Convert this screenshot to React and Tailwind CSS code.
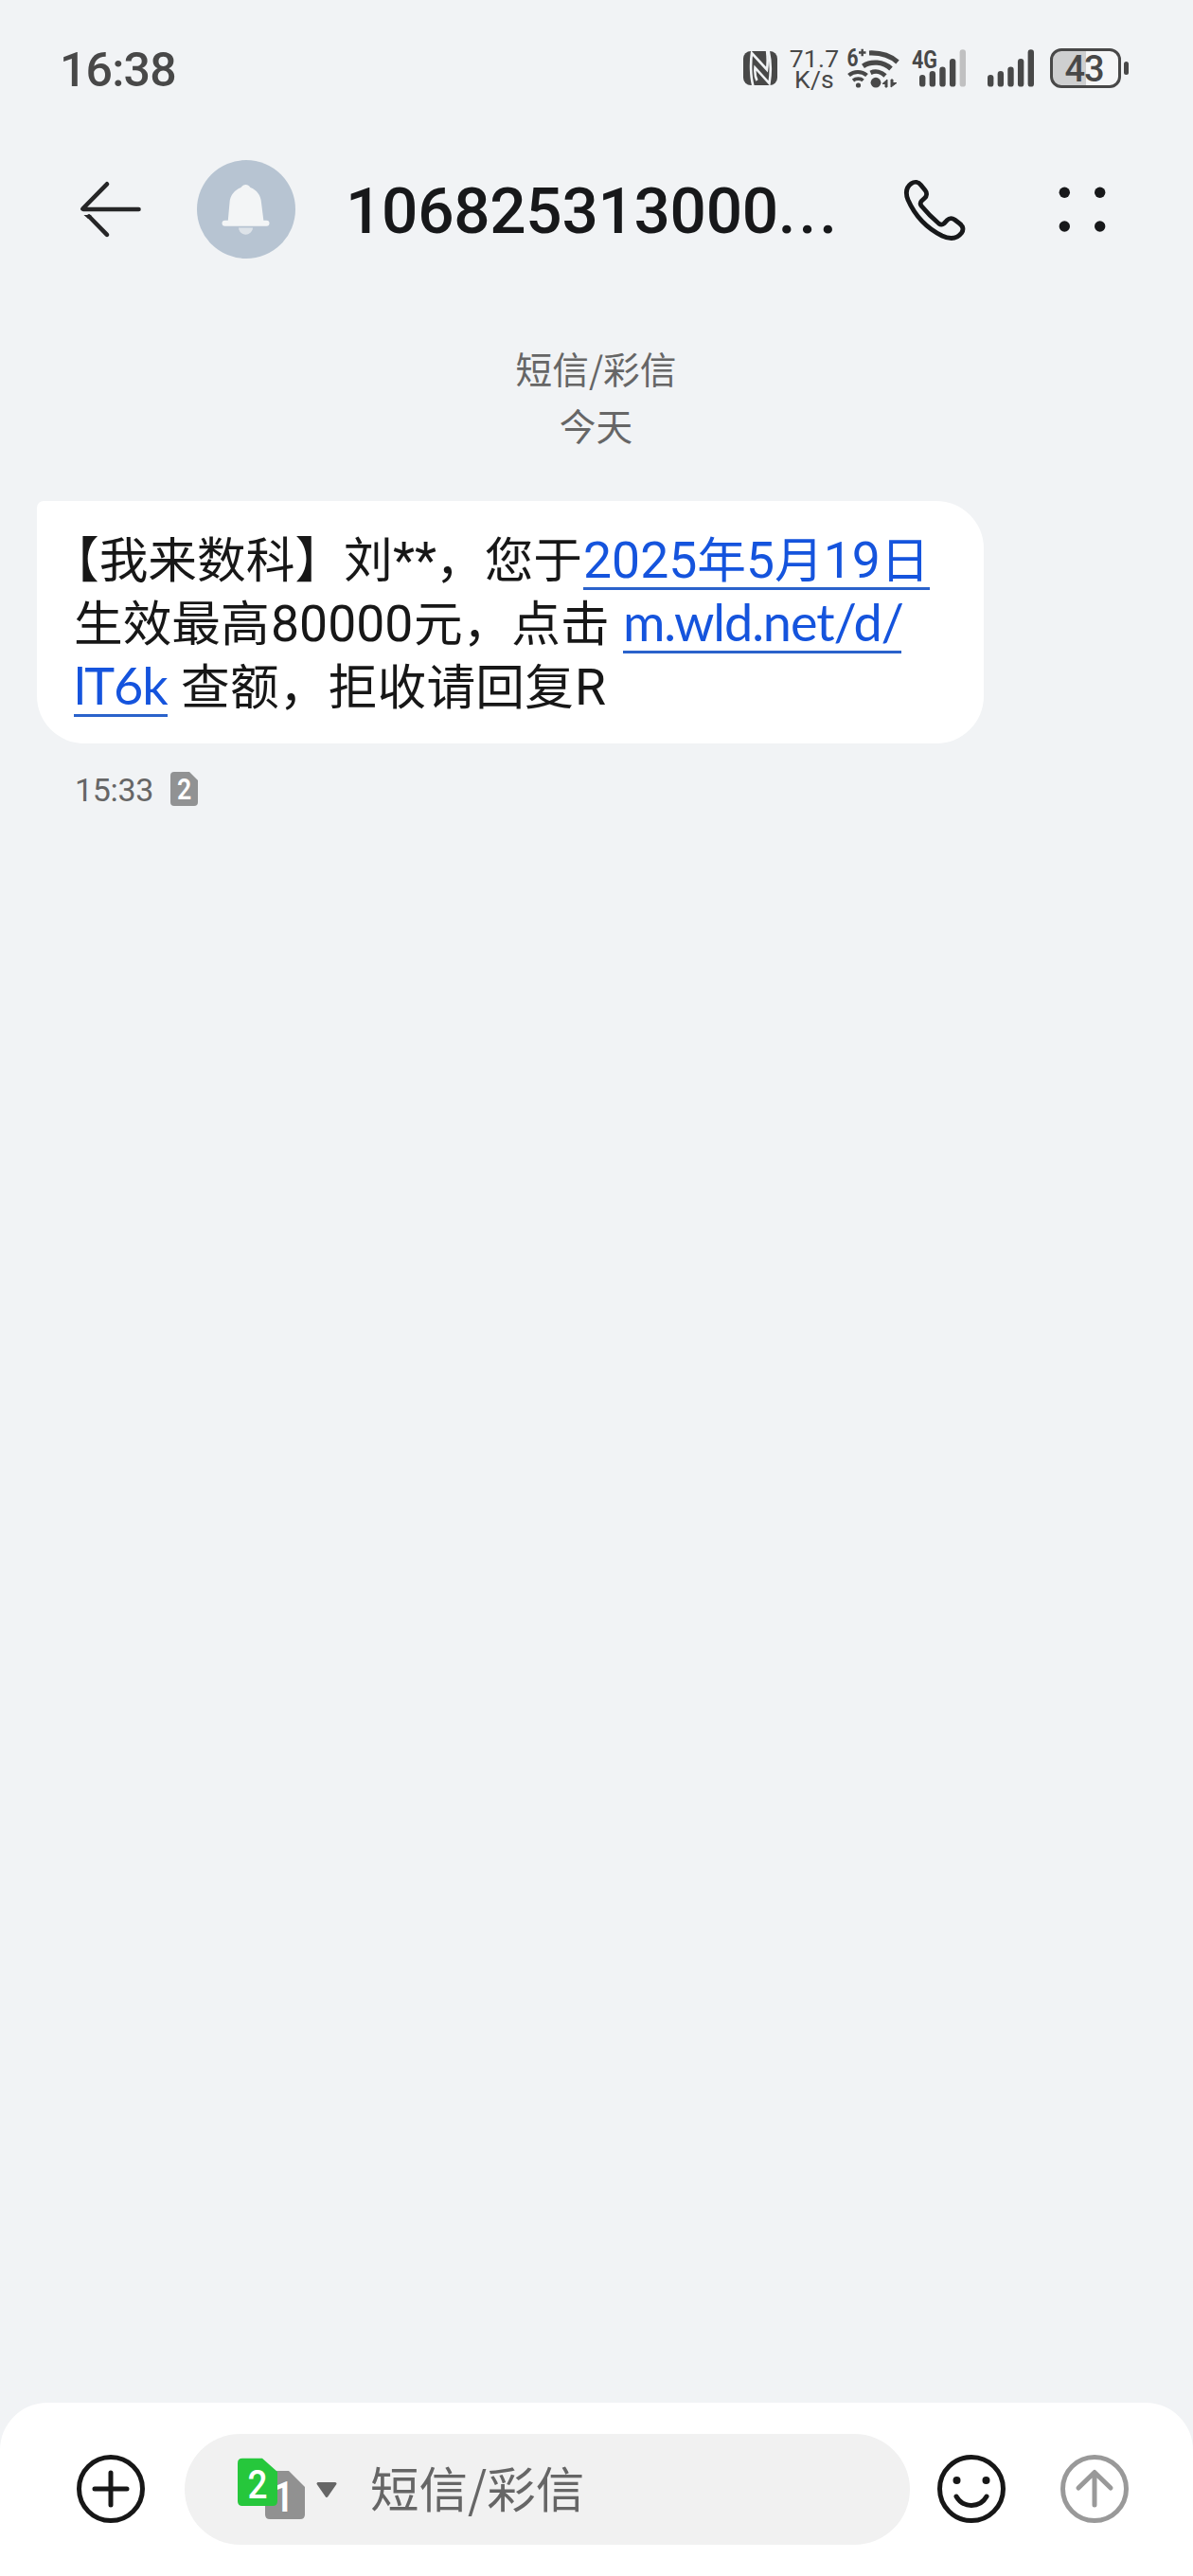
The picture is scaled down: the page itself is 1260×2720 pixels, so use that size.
import React from "react";

function NfcIcon() {
  return (
    <svg width="36" height="36" viewBox="0 0 36 36" className="shrink-0">
      <rect width="36" height="36" rx="8" fill="#484848" />
      <g fill="none" stroke="#f1f3f5" strokeWidth="2.600">
        <path d="M10.500 37C7.600 27 7.600 11 9 2L25 19.500C26 13 26 7 25 -1" />
        <path d="M26.500 -1C29.400 11 29 25 27.500 34L12.500 17.500C12 23 12.300 27 14.500 31" />
      </g>
    </svg>
  );
}

function WifiIcon() {
  return (
    <svg width="56" height="44" viewBox="894 49 56 44" className="shrink-0 overflow-visible">
      <g fill="none" stroke="#484848" strokeWidth="5.200">
        <path d="M918 55C930 54.500 940 57.500 948 64.500" />
        <path d="M911.500 68.800C920 63 933 64 941 71.500" />
        <path d="M919.500 75.800C925 73.200 931 75 935 79" strokeWidth="4.600" />
        <path d="M896.500 78.500C902 73.800 910 73.800 915.500 78.500" strokeWidth="4.200" />
        <path d="M901 84C904 81.500 909 81.500 911.500 84" strokeWidth="3.600" />
      </g>
      <circle cx="906.500" cy="89" r="2.600" fill="#484848" />
      <circle cx="925" cy="86.200" r="5.400" fill="#484848" />
      <path d="M932 87.500L937 83V91H935V87.500ZM941 91V83H943V86.500H947L941 91Z" fill="#484848" stroke="#484848" strokeWidth="1" />
      <text x="894.500" y="69" fontFamily="Roboto" fontSize="25" fontWeight="700" textLength="12" lengthAdjust="spacingAndGlyphs" fill="#484848">6</text>
      <path d="M907 54.500H914.500M910.700 50.700V58.300" stroke="#484848" strokeWidth="2.400" />
    </svg>
  );
}

function Signal({ weak = false }) {
  const tops = [79, 75, 70.5, 62, 52.3];
  return (
    <svg width="50" height="40" viewBox="0 52 50 40" className="shrink-0">
      {tops.map((t, i) => (
        <rect key={t} x={i * 10.65} y={t} width="6.400" height={91.6 - t} rx="3.200" fill={weak && i === 4 ? "#c0c0c1" : "#484848"} />
      ))}
    </svg>
  );
}

function Battery() {
  return (
    <div className="ml-[16px] flex items-center">
      <div className="h-[42px] w-[75px] rounded-[12px] border-[3px] border-[#484848] bg-[linear-gradient(90deg,#cecfd0_35px,#f5f6f7_35px)]">
        <div className="pr-[3px] text-center text-[38px] leading-[38px] font-medium tracking-[-1px]">43</div>
      </div>
      <div className="ml-[3px] h-[14px] w-[5px] rounded-full bg-[#484848]" />
    </div>
  );
}

function StatusBar() {
  return (
    <div className="flex h-[144px] items-center pl-[63px] font-[Roboto] text-[#484848]">
      <div className="mt-[4px] w-[130px] text-[50px] leading-[60px] font-medium tracking-[-0.800px]">16:38</div>
      <div className="ml-auto mr-[68px] flex items-center">
        <NfcIcon />
        <div className="ml-[10px] flex w-[58px] flex-col items-center pt-[1px] text-[26.500px] leading-[22px] font-[450] tracking-[0.200px]">
          <span>71.7</span>
          <span>K/s</span>
        </div>
        <div className="ml-[5px]"><WifiIcon /></div>
        <div className="relative ml-[21px]">
          <Signal weak />
          <svg width="30" height="24" viewBox="0 0 30 24" className="absolute -left-[9px] -top-[1px] overflow-visible">
            <text x="1" y="20.500" fontFamily="Roboto" fontSize="25" fontWeight="700" textLength="27" lengthAdjust="spacingAndGlyphs" fill="#484848">4G</text>
          </svg>
        </div>
        <div className="ml-[22px]"><Signal /></div>
        <Battery />
      </div>
    </div>
  );
}

function Header() {
  return (
    <div className="flex h-[154px] items-center pl-[83px]">
      <svg width="66" height="62" viewBox="83 190 66 62" className="shrink-0">
        <g fill="none" stroke="#262627" strokeWidth="4.600" strokeLinecap="round" strokeLinejoin="round">
          <path d="M113 194.300L87.300 220.500L88 221H146.500" />
          <path d="M94 228.500L113 247.800" />
        </g>
        <path d="M88.500 227H96L98 231H93Z" fill="#262627" />
      </svg>
      <svg width="104" height="104" viewBox="208 169 104 104" className="ml-[59px] shrink-0">
        <circle cx="260" cy="221" r="52" fill="#b7c4d2" />
        <path d="M240.700 234L242.500 214C243 206 248 200.500 254.500 198C257 194 262 194 264.500 198C271 200.500 275.500 206 276 214L278.500 234Z" fill="#f3f5f6" />
        <rect x="234.500" y="232.800" width="50" height="6" rx="3" fill="#f3f5f6" />
        <path d="M252 240.500H267C266 250 253 250 252 240.500Z" fill="#dde3e9" />
      </svg>
      <div className="mt-[4px] ml-[53px] w-[591px] shrink-0 whitespace-nowrap font-[Roboto] text-[67.500px] leading-[80px] font-medium tracking-[-0.300px] text-[#17181a]">
        106825313000<span className="tracking-[3px]">...</span>
      </div>
      <svg width="66" height="66" viewBox="954 188 66 66" className="-ml-[2px] mt-px shrink-0">
        <path
          d="M962.500 192.800C966 190.300 970 191 972.500 194.200L977 199.800C979.300 202.600 979 206 976.500 208.300L973.500 211C971.800 212.600 971.700 214.200 973 216.200C979 223.500 985 229.500 991.500 235C993.500 236.500 995.200 236.600 997 235L1000 231.800C1002.500 229.300 1005.500 229 1008.300 231L1013.500 235C1017.300 237.800 1018 241.500 1015.500 245C1010.500 251.500 1004 252.200 995 248C979 240 966 226 959 210C956 202.500 957 196.800 962.500 192.800Z"
          fill="none" stroke="#17181a" strokeWidth="4.800" strokeLinejoin="round"
        />
      </svg>
      <svg width="50" height="48" viewBox="1118 196 50 48" className="ml-[98px] shrink-0" fill="#17181a">
        <circle cx="1124.300" cy="202.300" r="5.700" />
        <circle cx="1161.700" cy="202.300" r="5.700" />
        <circle cx="1124.300" cy="238" r="5.700" />
        <circle cx="1161.700" cy="238" r="5.700" />
      </svg>
    </div>
  );
}

function SimBadge() {
  return (
    <svg width="29" height="36" viewBox="0 0 29 36" className="ml-[20px]">
      <path d="M4 0H20L29 9V32Q29 36 25 36H4Q0 36 0 32V4Q0 0 4 0Z" fill="#919293" />
      <text x="7" y="29" fontFamily="Roboto" fontSize="31" fontWeight="600" textLength="15" lengthAdjust="spacingAndGlyphs" fill="#fff">2</text>
    </svg>
  );
}

function Link({ className, children }) {
  return (
    <span className={"relative h-[67px] text-[#1554dd] after:absolute after:-bottom-[2px] after:left-0 after:h-[3px] after:w-full after:bg-[#2a62cb] after:content-[''] " + className}>
      {children}
    </span>
  );
}

function Num({ children }) {
  return <span className="font-[Roboto] text-[53.500px] leading-none">{children}</span>;
}

function Url({ children }) {
  return <span className="font-[Lato] text-[54px] leading-none tracking-[-1.050px]">{children}</span>;
}

function Message() {
  return (
    <div className="ml-[39px] mt-[46px] h-[256px] w-[1000px] rounded-[50px] rounded-tl-[7px] bg-white pl-[39px] pt-[25px]">
      <div className="whitespace-nowrap font-['Noto_Sans_CJK_SC',sans-serif] text-[51.700px] leading-[67px] text-[#171717]">
        <div className="flex h-[67px]">
          <span className="-ml-[25px] w-[362px]">【我来数科】刘</span>
          <span className="w-[45px]"><Num>**</Num></span>
          <span className="w-[156px]">，您于</span>
          <Link className="w-[366px]">
            <Num>2025</Num>年<Num>5</Num>月<Num>19</Num>日
          </Link>
        </div>
        <div className="flex h-[67px]">
          <span className="w-[208px]">生效最高</span>
          <span className="w-[151px]"><Num>80000</Num></span>
          <span className="w-[221px]">元，点击</span>
          <Link className="w-[294px]"><Url>m.wld.net/d/</Url></Link>
        </div>
        <div className="flex h-[67px]">
          <Link className="w-[99px]"><Url>lT6k</Url></Link>
          <span className="ml-[14px] w-[416px] tracking-[0.200px]">查额，拒收请回复</span>
          <span><Num>R</Num></span>
        </div>
      </div>
    </div>
  );
}

function Composer() {
  return (
    <div className="mt-auto flex h-[183px] items-start rounded-t-[50px] bg-white pl-[81px] pt-[33px]">
      <div className="flex h-[117px] items-center">
        <svg width="72" height="72" viewBox="0 0 72 72" className="mb-px" fill="none" stroke="#171717" strokeWidth="5" strokeLinecap="round">
          <circle cx="36" cy="36" r="33.500" />
          <path d="M19 36H53M36 19V53" />
        </svg>
        <div className="ml-[42px] flex h-[117px] w-[766px] items-center rounded-full bg-[#f1f1f1] pl-[56px]">
          <svg width="72" height="66" viewBox="251 2595 72 66" className="mb-px" fontFamily="Roboto" fontWeight="500" fill="#fff">
            <path d="M285 2609H305L322 2626V2655Q322 2660 317 2660H285Q280 2660 280 2655V2614Q280 2609 285 2609Z" fill="#919191" />
            <text x="288.500" y="2651.500" fontSize="45" fontWeight="600" textLength="22" lengthAdjust="spacingAndGlyphs">1</text>
            <path d="M256 2595.700H277L293 2610V2641Q293 2646 288 2646H256Q251 2646 251 2641V2600.700Q251 2595.700 256 2595.700Z" fill="#26c73c" />
            <text x="261.500" y="2638" fontSize="42" textLength="21" lengthAdjust="spacingAndGlyphs">2</text>
          </svg>
          <svg width="24" height="18" viewBox="0 0 24 18" className="ml-[10px] mt-[2px]">
            <path d="M3 1.500H21L12 14.500Z" fill="#666" stroke="#666" strokeWidth="3" strokeLinejoin="round" />
          </svg>
          <div className="mb-[6px] ml-[34px] whitespace-nowrap font-['Noto_Sans_CJK_SC',sans-serif] text-[51.500px] leading-[60px] text-[#666]">短信/彩信</div>
        </div>
        <svg width="72" height="72" viewBox="0 0 72 72" className="mb-px ml-[29px]" fill="none" stroke="#171717" strokeWidth="5" strokeLinecap="round">
          <circle cx="36" cy="36" r="33.500" />
          <path d="M20 44C27 56.500 45 56.500 52 44" />
          <circle cx="20.500" cy="27" r="4" fill="#171717" stroke="none" />
          <circle cx="51.500" cy="27" r="4" fill="#171717" stroke="none" />
        </svg>
        <svg width="72" height="72" viewBox="0 0 72 72" className="mb-px ml-[58px]" fill="none" stroke="#999" strokeWidth="5" strokeLinecap="round" strokeLinejoin="round">
          <circle cx="36" cy="36" r="33.500" />
          <path d="M19 35L36 18.500L53 35M36 19V53" />
        </svg>
      </div>
    </div>
  );
}

export default function App() {
  return (
    <div className="flex h-[2720px] w-[1260px] flex-col overflow-hidden bg-[#f1f3f5]">
      <StatusBar />
      <Header />
      <div className="mb-[5px] mt-[60px] pr-[1px] text-center font-['Noto_Sans_CJK_SC',sans-serif] text-[38.700px] leading-[60px] text-[#666]">
        <div>短信/彩信</div>
        <div>今天</div>
      </div>
      <Message />
      <div className="ml-[79px] mt-[30px] flex h-[36px] items-center font-[Roboto] text-[34px] leading-[36px] tracking-[-0.300px] text-[#666]">
        <span className="w-[81px] pt-[2px]">15:33</span>
        <SimBadge />
      </div>
      <Composer />
    </div>
  );
}
